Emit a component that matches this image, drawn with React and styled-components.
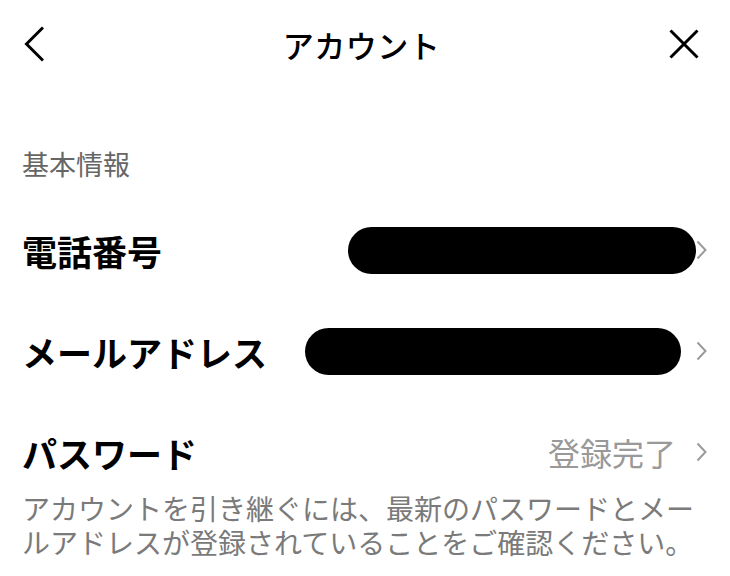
import React from "react";
import styled, { createGlobalStyle } from "styled-components";

const GlobalStyle = createGlobalStyle`
  body {
    margin: 0;
    background: #fff;
    font-family: "Noto Sans CJK JP", "Noto Sans", sans-serif;
    color: #000;
  }
`;

const Page = styled.div`
  width: 730px;
  height: 576px;
  overflow: hidden;
  background: #fff;
`;

const Header = styled.header`
  height: 88px;
  display: grid;
  grid-template-columns: 1fr auto 1fr;
  align-items: center;
  padding: 0 31px 0 24px;
`;

const HeaderButton = styled.button`
  border: 0;
  background: none;
  padding: 0;
  display: flex;
  align-items: center;
  justify-self: ${(p) => (p.$end ? "end" : "start")};
  cursor: pointer;
`;

const Title = styled.h1`
  margin: 0;
  font-size: 31px;
  font-weight: 500;
  line-height: 1;
  letter-spacing: 0.5px;
`;

const Content = styled.main`
  padding: 0 23px 0 22px;
`;

const SectionLabel = styled.div`
  margin-top: 58px;
  font-size: 27px;
  line-height: 36px;
  color: #666;
`;

const List = styled.div`
  margin-top: 40px;
  display: flex;
  flex-direction: column;
  gap: 45px;
`;

const Row = styled.div`
  height: 56px;
  display: flex;
  align-items: center;
  justify-content: space-between;
`;

const RowLabel = styled.span`
  font-size: 35px;
  font-weight: 700;
  line-height: 1;
`;

const RowRight = styled.div`
  display: flex;
  align-items: center;
`;

const Redaction = styled.div`
  width: ${(p) => p.$width}px;
  height: 47px;
  border-radius: 24px;
  background: #000;
  margin-right: ${(p) => p.$gap}px;
`;

const Value = styled.span`
  font-size: 32px;
  line-height: 1;
  color: #999;
  margin-right: 20px;
`;

const Note = styled.p`
  margin: 11px 0 0;
  font-size: 28px;
  line-height: 34px;
  color: #7a7a7a;
`;

const Chevron = () => (
  <svg width="11" height="20" viewBox="0 0 11 20">
    <polyline points="1.5,1.5 9.5,10 1.5,18.5" fill="none" stroke="#9a9a9a" strokeWidth="2" />
  </svg>
);

const BackIcon = () => (
  <svg width="20" height="36" viewBox="0 0 20 36">
    <polyline points="19,1.5 2.5,18 19,34.5" fill="none" stroke="#000" strokeWidth="3" />
  </svg>
);

const CloseIcon = () => (
  <svg width="30" height="30" viewBox="0 0 30 30">
    <path d="M1.5 1.5 L28.5 28.5 M28.5 1.5 L1.5 28.5" fill="none" stroke="#000" strokeWidth="3" />
  </svg>
);

export default function App() {
  return (
    <Page>
      <GlobalStyle />
      <Header>
        <HeaderButton aria-label="戻る">
          <BackIcon />
        </HeaderButton>
        <Title>アカウント</Title>
        <HeaderButton $end aria-label="閉じる">
          <CloseIcon />
        </HeaderButton>
      </Header>
      <Content>
        <SectionLabel>基本情報</SectionLabel>
        <List>
          <Row>
            <RowLabel>電話番号</RowLabel>
            <RowRight>
              <Redaction $width={348} $gap={0} />
              <Chevron />
            </RowRight>
          </Row>
          <Row>
            <RowLabel>メールアドレス</RowLabel>
            <RowRight>
              <Redaction $width={376} $gap={15} />
              <Chevron />
            </RowRight>
          </Row>
          <Row>
            <RowLabel>パスワード</RowLabel>
            <RowRight>
              <Value>登録完了</Value>
              <Chevron />
            </RowRight>
          </Row>
        </List>
        <Note>
          アカウントを引き継ぐには、最新のパスワードとメールアドレスが登録されていることをご確認ください。
        </Note>
      </Content>
    </Page>
  );
}
